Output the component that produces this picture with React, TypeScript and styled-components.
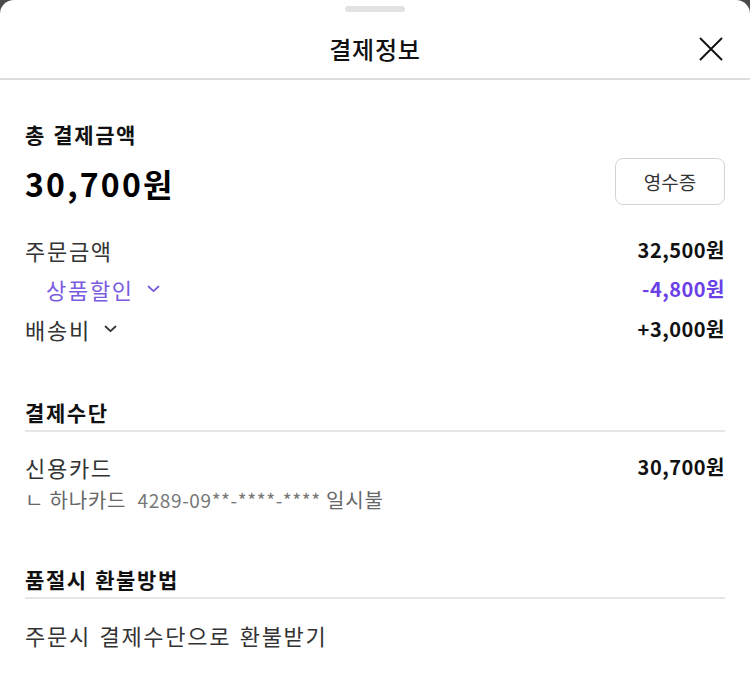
import styled, { createGlobalStyle } from 'styled-components'

const GlobalStyle = createGlobalStyle`
  html, body {
    margin: 0;
    padding: 0;
    background: #4a4a4a;
  }
  body {
    font-family: "Noto Sans CJK KR", "Noto Sans", sans-serif;
    color: #222;
  }
`

const App = () => {
  return (
    <>
      <GlobalStyle />
      <Sheet>
        <Handle />
        <Header>
          <Title>결제정보</Title>
          <CloseButton aria-label="닫기">
            <svg width="24" height="24" viewBox="0 0 24 24" fill="none" stroke="#111" strokeWidth="1.9" strokeLinecap="round">
              <path d="M1.5 1.5 L22.5 22.5 M22.5 1.5 L1.5 22.5" />
            </svg>
          </CloseButton>
        </Header>

        <Body>
          <Section>
            <SectionTitle>총 결제금액</SectionTitle>
            <TotalRow>
              <Total>30,700원</Total>
              <ReceiptButton>영수증</ReceiptButton>
            </TotalRow>

            <Rows>
              <Row>
                <Label>주문금액</Label>
                <Amount>32,500원</Amount>
              </Row>
              <Row>
                <Label indent accent>
                  상품할인<Chevron color="#7b5ce0" />
                </Label>
                <Amount accent>-4,800원</Amount>
              </Row>
              <Row>
                <Label>
                  배송비<Chevron color="#333" />
                </Label>
                <Amount>+3,000원</Amount>
              </Row>
            </Rows>
          </Section>

          <Section>
            <SectionTitle underline>결제수단</SectionTitle>
            <Row>
              <Label>신용카드</Label>
              <Amount>30,700원</Amount>
            </Row>
            <SubLine>
              ㄴ 하나카드 <CardNo>4289-09**-****-****</CardNo> 일시불
            </SubLine>
          </Section>

          <Section>
            <SectionTitle underline>품절시 환불방법</SectionTitle>
            <Row>
              <Label>주문시 결제수단으로 환불받기</Label>
            </Row>
          </Section>
        </Body>
      </Sheet>
    </>
  )
}

const Chevron = ({ color }: { color: string }) => (
  <svg width="13" height="8" viewBox="0 0 13 8" fill="none" stroke={color} strokeWidth="1.8" strokeLinecap="round" strokeLinejoin="round">
    <path d="M1.5 1.5 L6.5 6.2 L11.5 1.5" />
  </svg>
)

const Sheet = styled.div`
  background: #fff;
  border-radius: 14px 14px 0 0;
  height: 681px;
  overflow: hidden;
  display: flex;
  flex-direction: column;
`

const Handle = styled.div`
  width: 60px;
  height: 6px;
  border-radius: 3px;
  background: #e2e2e2;
  margin: 6px auto 0;
  flex-shrink: 0;
`

const Header = styled.div`
  position: relative;
  height: 66px;
  display: flex;
  align-items: center;
  justify-content: center;
  border-bottom: 2px solid #dcdcdc;
  flex-shrink: 0;
`

const Title = styled.h1`
  margin: 0;
  padding-top: 8px;
  font-size: 24px;
  line-height: 24px;
  font-weight: 500;
  letter-spacing: 0.8px;
  color: #111;
`

const CloseButton = styled.button`
  position: absolute;
  right: 27px;
  top: 25px;
  background: none;
  border: none;
  padding: 0;
  display: flex;
`

const Body = styled.div`
  padding: 39px 25px 0;
  display: flex;
  flex-direction: column;
  gap: 48px;
`

const Section = styled.section`
  display: flex;
  flex-direction: column;
`

const SectionTitle = styled.h2<{ underline?: boolean }>`
  margin: 0;
  font-size: 21px;
  font-weight: 700;
  color: #111;
  line-height: 30px;
  letter-spacing: 1.6px;
  word-spacing: 1px;
  padding-bottom: ${(p) => (p.underline ? '3px' : '0')};
  border-bottom: ${(p) => (p.underline ? '2px solid #e6e6e6' : 'none')};
  margin-bottom: ${(p) => (p.underline ? '16px' : '0')};
`

const TotalRow = styled.div`
  display: flex;
  justify-content: space-between;
  align-items: flex-start;
  margin-top: 9px;
`

const Total = styled.div`
  padding-top: 5px;
  font-size: 32px;
  line-height: 40px;
  font-weight: 700;
  color: #000;
  letter-spacing: 2.2px;
`

const ReceiptButton = styled.button`
  width: 110px;
  height: 47px;
  border: 1px solid #d4d4d4;
  border-radius: 8px;
  background: #fff;
  font-family: inherit;
  font-size: 19px;
  color: #333;
  padding: 0;
`

const Rows = styled.div`
  margin-top: 25px;
  display: flex;
  flex-direction: column;
`

const Row = styled.div`
  display: flex;
  justify-content: space-between;
  align-items: center;
  height: 39.5px;
`

const Label = styled.div<{ indent?: boolean; accent?: boolean }>`
  display: flex;
  align-items: center;
  gap: 13px;
  font-size: 22px;
  line-height: 30px;
  letter-spacing: 1.7px;
  word-spacing: 2px;
  color: ${(p) => (p.accent ? '#7b5ce0' : '#333')};
  padding-left: ${(p) => (p.indent ? '21px' : '0')};
`

const Amount = styled.div<{ accent?: boolean }>`
  font-size: 20px;
  line-height: 30px;
  font-weight: 700;
  letter-spacing: 0.5px;
  color: ${(p) => (p.accent ? '#6a40e6' : '#111')};
`

const SubLine = styled.div`
  font-size: 20px;
  line-height: 26px;
  letter-spacing: 0.8px;
  color: #666;
  margin-bottom: 3px;
  white-space: pre;
`

const CardNo = styled.span`
  margin-left: 6px;
  font-size: 19px;
  letter-spacing: 0.6px;
  color: #777;
`

export default App
